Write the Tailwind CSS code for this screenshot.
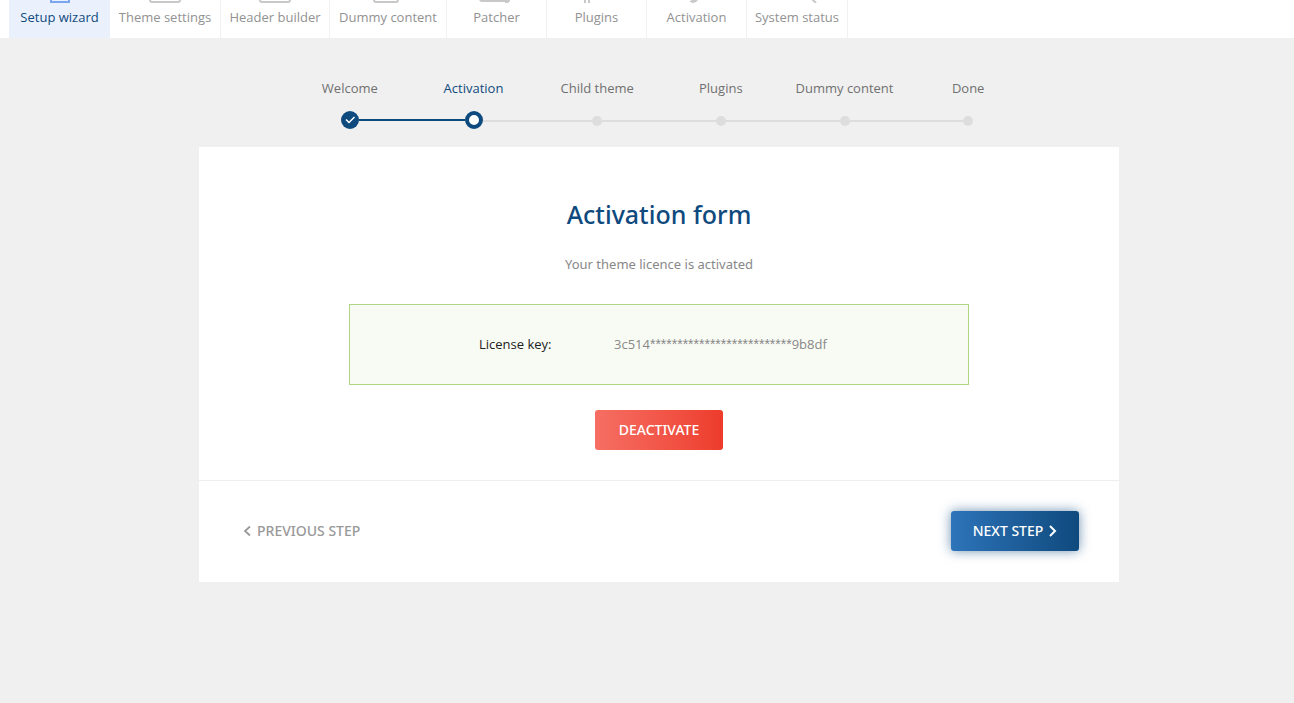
<!DOCTYPE html>
<html lang="en">
<head>
<meta charset="utf-8">
<title>Setup wizard</title>
<script src="https://cdn.jsdelivr.net/npm/@tailwindcss/browser@4"></script>
</head>
<body class="min-h-screen bg-[#f0f0f0] font-['Open_Sans','Noto_Sans',sans-serif] text-[13px] text-[#707070]">
<nav class="flex h-[38px] bg-white pl-[9px] font-medium text-[#929292]">
  <a href="#" class="flex w-[101px] flex-col items-center gap-[5px] bg-[#ebf1fc] text-[#0f4a7e]">
    <svg class="h-[3px] w-5" viewBox="0 0 20 3" fill="none" stroke="#7aa5f0" stroke-width="2"><path d="M1 0V2H19V0"/></svg>Setup wizard</a>
  <a href="#" class="flex w-[111px] flex-col items-center gap-[5px] border-r border-[#f1f1f1]">
    <svg class="h-[3px] w-8" viewBox="0 0 32 3" fill="none" stroke="#c8c8c8" stroke-width="2"><path d="M1 0Q1 2 3 2H29Q31 2 31 0"/></svg>Theme settings</a>
  <a href="#" class="flex w-[109px] flex-col items-center gap-[5px] border-r border-[#f1f1f1]">
    <svg class="h-[3px] w-8" viewBox="0 0 32 3" fill="none" stroke="#c8c8c8" stroke-width="2"><path d="M1 0Q1 2 3 2H29Q31 2 31 0"/></svg>Header builder</a>
  <a href="#" class="flex w-[117px] flex-col items-center gap-[5px] border-r border-[#f1f1f1]">
    <svg class="h-[3px] w-[30px]" viewBox="0 0 30 3" fill="none" stroke="#c8c8c8" stroke-width="2"><path d="M1 0Q1 2 3 2H23Q25 2 25 0"/></svg>Dummy content</a>
  <a href="#" class="flex w-[100px] flex-col items-center gap-[5px] border-r border-[#f1f1f1]">
    <svg class="h-[3px] w-9" viewBox="0 0 36 3" fill="#c8c8c8"><path d="M0 0H31V1L29 3H26V2H2Z"/></svg>Patcher</a>
  <a href="#" class="flex w-[100px] flex-col items-center gap-[5px] border-r border-[#f1f1f1]">
    <svg class="h-[3px] w-[26px]" viewBox="0 0 26 3" fill="#c8c8c8"><path d="M0 0H2V3H0ZM4 0H6V3H4Z"/></svg>Plugins</a>
  <a href="#" class="flex w-[100px] flex-col items-center gap-[5px] border-r border-[#f1f1f1]">
    <svg class="h-[3px] w-[26px]" viewBox="0 0 26 3" fill="#c8c8c8"><path d="M6 1L8 0H14L12 2L9 3L6 2Z"/></svg>Activation</a>
  <a href="#" class="flex w-[101px] flex-col items-center gap-[5px] border-r border-[#f1f1f1]">
    <svg class="h-[3px] w-10" viewBox="0 0 40 3" fill="none" stroke="#c8c8c8" stroke-width="2"><path d="M35 -1L39 3"/></svg>System status</a>
</nav>
<main class="mt-[41px] pb-10 pl-6">
  <ol class="mx-auto grid max-w-[742px] grid-cols-6 font-medium">
    <li class="flex flex-col items-center gap-3">Welcome
      <span class="flex h-[18px] w-full items-center"><i class="flex-1"></i><svg class="size-[18px]" viewBox="0 0 18 18"><circle cx="9" cy="9" r="9" fill="#0f4a7e"/><path d="M5 8.500L8 11.500L13.500 6" fill="none" stroke="#fff" stroke-width="1.500"/></svg><i class="h-0.5 flex-1 bg-[#0f4a7e]"></i></span></li>
    <li class="flex flex-col items-center gap-3 text-[#0f4a7e]">Activation
      <span class="flex h-[18px] w-full items-center"><i class="h-0.5 flex-1 bg-[#0f4a7e]"></i><i class="size-[18px] rounded-full border-4 border-[#0f4a7e] bg-white"></i><i class="mt-0.5 h-0.5 flex-1 bg-[#ddd]"></i></span></li>
    <li class="flex flex-col items-center gap-3">Child theme
      <span class="flex h-[18px] w-full items-center pt-0.5"><i class="h-0.5 flex-1 bg-[#ddd]"></i><i class="size-2.5 rounded-full bg-[#ddd]"></i><i class="h-0.5 flex-1 bg-[#ddd]"></i></span></li>
    <li class="flex flex-col items-center gap-3">Plugins
      <span class="flex h-[18px] w-full items-center pt-0.5"><i class="h-0.5 flex-1 bg-[#ddd]"></i><i class="size-2.5 rounded-full bg-[#ddd]"></i><i class="h-0.5 flex-1 bg-[#ddd]"></i></span></li>
    <li class="flex flex-col items-center gap-3">Dummy content
      <span class="flex h-[18px] w-full items-center pt-0.5"><i class="h-0.5 flex-1 bg-[#ddd]"></i><i class="size-2.5 rounded-full bg-[#ddd]"></i><i class="h-0.5 flex-1 bg-[#ddd]"></i></span></li>
    <li class="flex flex-col items-center gap-3">Done
      <span class="flex h-[18px] w-full items-center pt-0.5"><i class="h-0.5 flex-1 bg-[#ddd]"></i><i class="size-2.5 rounded-full bg-[#ddd]"></i><i class="flex-1"></i></span></li>
  </ol>
  <section class="mx-auto mt-[18px] max-w-[920px] bg-white">
    <div class="flex flex-col items-center px-10 pt-12 pb-[30px]">
      <h1 class="font-['Noto_Sans',sans-serif] text-[25px] leading-[38px] font-medium text-[#0f4a7e]">Activation form</h1>
      <p class="mt-[21px] font-['Noto_Sans',sans-serif] leading-5 text-[#888]">Your theme licence is activated</p>
      <dl class="mt-[30px] flex w-full max-w-[620px] items-center border border-[#b0d583] bg-[#f8fbf4] py-[29px] pl-[129px] leading-[21px]">
        <dt class="w-[135px] font-medium text-[#222]">License key:</dt>
        <dd class="text-[#888]">3c514<span class="font-['Liberation_Sans',sans-serif] text-sm leading-none">**************************</span>9b8df</dd>
      </dl>
      <button class="mt-[25px] h-10 w-32 rounded-[3px] bg-linear-to-r from-[#f66e63] to-[#ed3b2b] font-['Noto_Sans',sans-serif] text-sm font-medium text-white">DEACTIVATE</button>
    </div>
    <div class="flex items-center justify-between border-t border-[#eee] px-10 pt-[30px] pb-[31px]">
      <button class="flex h-10 items-center gap-1.5 pl-1 font-['Noto_Sans',sans-serif] text-sm font-medium text-[#999]"><svg class="h-3 w-2" viewBox="0 0 8 12" fill="none" stroke="currentColor" stroke-width="1.800"><path d="M7 1.500L2 6L7 10.500"/></svg>PREVIOUS STEP</button>
      <button class="flex h-10 w-32 items-center justify-center gap-1.5 rounded-[3px] bg-linear-to-r from-[#2d74b9] to-[#0f4a7e] font-['Noto_Sans',sans-serif] text-sm font-medium text-white shadow-[0_0_12px_#0f4a7e99]">NEXT STEP<svg class="h-3 w-2" viewBox="0 0 8 12" fill="none" stroke="currentColor" stroke-width="2"><path d="M1 1L6 6L1 11"/></svg></button>
    </div>
  </section>
</main>
</body>
</html>
